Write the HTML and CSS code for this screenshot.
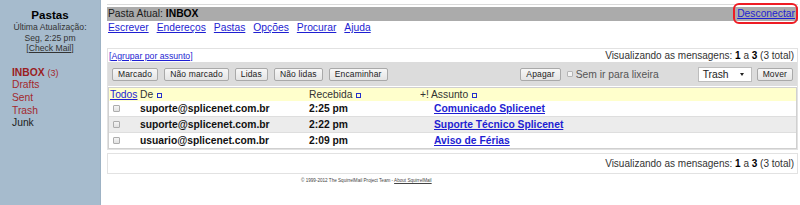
FILE: index.html
```html
<!DOCTYPE html>
<html lang="pt-BR">
<head>
<meta charset="utf-8">
<title>SquirrelMail - INBOX</title>
<link rel="stylesheet" href="styles.css">
</head>
<body>
<div class="page">
  <aside class="sidebar">
    <h1 class="side-title">Pastas</h1>
    <div class="side-info">
      <div>Última Atualização:</div>
      <div>Seg, 2:25 pm</div>
      <div>[<a href="#" class="check">Check Mail</a>]</div>
    </div>
    <ul class="folders">
      <li><a class="folder current" href="#">INBOX</a> <span class="count">(3)</span></li>
      <li><a class="folder" href="#">Drafts</a></li>
      <li><a class="folder" href="#">Sent</a></li>
      <li><a class="folder" href="#">Trash</a></li>
      <li><a class="folder junk" href="#">Junk</a></li>
    </ul>
  </aside>
  <main class="main">
    <div class="topline"></div>
    <div class="titlebar">
      <span>Pasta Atual: <b>INBOX</b></span>
      <a class="logout" href="#">Desconectar</a>
    </div>
    <nav class="menu">
      <a href="#">Escrever</a>
      <a href="#">Endereços</a>
      <a href="#">Pastas</a>
      <a href="#">Opções</a>
      <a href="#">Procurar</a>
      <a href="#">Ajuda</a>
    </nav>
    <section class="msgbox">
      <div class="inforow">
        <a class="thread" href="#">[Agrupar por assunto]</a>
        <span class="info">Visualizando as mensagens: <b>1</b> a <b>3</b> (3 total)</span>
      </div>
      <div class="toolbar">
        <div class="group">
          <button class="btn">Marcado</button>
          <button class="btn">Não marcado</button>
          <button class="btn">Lidas</button>
          <button class="btn">Não lidas</button>
          <button class="btn">Encaminhar</button>
        </div>
        <div class="group right">
          <button class="btn">Apagar</button>
          <label class="bypass"><span class="tbox"></span>Sem ir para lixeira</label>
          <span class="select">Trash<span class="arrow"></span></span>
          <button class="btn">Mover</button>
        </div>
      </div>
      <div class="list">
        <div class="row head">
          <span><a href="#">Todos</a></span>
          <span>De <i class="sort"></i></span>
          <span>Recebida <i class="sort"></i></span>
          <span class="flags">+!</span>
          <span class="subj-head">Assunto <i class="sort"></i></span>
        </div>
        <div class="row">
          <span><input type="checkbox" class="cb"></span>
          <span class="from">suporte@splicenet.com.br</span>
          <span class="date">2:25 pm</span>
          <span></span>
          <span class="subj"><a href="#">Comunicado Splicenet</a></span>
        </div>
        <div class="row alt">
          <span><input type="checkbox" class="cb"></span>
          <span class="from">suporte@splicenet.com.br</span>
          <span class="date">2:22 pm</span>
          <span></span>
          <span class="subj"><a href="#">Suporte Técnico Splicenet</a></span>
        </div>
        <div class="row last">
          <span><input type="checkbox" class="cb"></span>
          <span class="from">usuario@splicenet.com.br</span>
          <span class="date">2:09 pm</span>
          <span></span>
          <span class="subj"><a href="#">Aviso de Férias</a></span>
        </div>
      </div>
    </section>
    <section class="msgbox bottom">
      <span class="info">Visualizando as mensagens: <b>1</b> a <b>3</b> (3 total)</span>
    </section>
    <footer class="footer">© 1999-2012 The SquirrelMail Project Team - <a href="#">About SquirrelMail</a></footer>
  </main>
</div>
</body>
</html>
```
FILE: styles.css
```css
* { box-sizing: border-box; }
html, body { margin: 0; padding: 0; }
body {
  font-family: "Liberation Sans", Arial, sans-serif;
  font-size: 10.3px;
  color: #222;
  background: #fff;
  width: 800px;
  height: 205px;
  overflow: hidden;
}
a { color: #1e1ed2; }

.page { display: flex; height: 205px; }

/* sidebar */
.sidebar {
  width: 101px;
  background: #a6bbcd;
  border-right: 1px solid #9db2c4;
  padding-top: 8px;
}
.side-title {
  margin: 0;
  text-align: center;
  font-size: 11.6px;
  font-weight: bold;
  line-height: 14px;
  color: #000;
}
.side-info {
  text-align: center;
  font-size: 8.6px;
  line-height: 10.5px;
  color: #333;
}
.side-info a { color: #333; }
.folders {
  list-style: none;
  margin: 13px 0 0 12px;
  padding: 0;
  font-size: 10.3px;
  line-height: 12.7px;
}
.folder { color: #a3292d; text-decoration: none; }
.folder.current { font-weight: bold; color: #9a1d22; }
.count { color: #a3292d; font-size: 9px; }
.folder.junk { color: #222; }

/* main */
.main {
  flex: 1;
  min-width: 0;
  padding: 4px 2px 0 6px;
}
.topline { height: 1px; background: #dadada; margin-bottom: 2px; }
.titlebar {
  display: flex;
  justify-content: space-between;
  align-items: center;
  background: #ababab;
  height: 14px;
  line-height: 14px;
  padding: 0 3px 0 1px;
  color: #1a1a1a;
}
.titlebar b { color: #000; }
.logout { position: relative; }
.logout::after {
  content: "";
  position: absolute;
  left: -4px;
  right: -3px;
  top: -4px;
  bottom: -3px;
  border: 2px solid #ee1c24;
  border-radius: 6px;
}
.menu {
  display: flex;
  gap: 8px;
  height: 14px;
  line-height: 14px;
  padding-left: 1px;
}

.msgbox {
  margin-top: 13px;
  border: 1px solid #e2e2e2;
}
.inforow {
  display: flex;
  justify-content: space-between;
  align-items: center;
  height: 13px;
  padding: 0 3px 0 1px;
}
.thread { font-size: 8.7px; }
.info { font-size: 10px; color: #333; }
.info b { color: #000; }

.toolbar {
  display: flex;
  align-items: center;
  height: 24px;
  background: #dcdcdc;
  padding: 0 4px 0 4px;
}
.group { display: flex; align-items: center; gap: 6px; }
.group.right { margin-left: auto; gap: 0; }
.btn {
  font-family: "Liberation Sans", Arial, sans-serif;
  font-size: 8.5px;
  letter-spacing: 0.15px;
  color: #222;
  height: 13px;
  line-height: 11px;
  padding: 0 5px;
  margin: 0;
  border: 1px solid #a9a9a9;
  border-radius: 2px;
  background: linear-gradient(#f7f7f7, #e4e4e4);
}
.bypass {
  display: flex;
  align-items: center;
  color: #555;
  margin-left: 6px;
  margin-right: 39px;
}
.tbox {
  width: 6px;
  height: 6px;
  border: 1px solid #b5b5b5;
  background: #f3f3f3;
  margin-right: 3px;
  border-radius: 1px;
}
.select {
  position: relative;
  display: inline-block;
  width: 54px;
  height: 15px;
  line-height: 13px;
  background: #fff;
  border: 1px solid #bdbdbd;
  padding-left: 4px;
  margin-right: 5px;
  color: #222;
}
.arrow {
  position: absolute;
  right: 7px;
  top: 5px;
  border-left: 2.5px solid transparent;
  border-right: 2.5px solid transparent;
  border-top: 3.5px solid #222;
}

.list {
  margin-top: 1px;
  border: 1px solid #d0d0d0;
}
.row {
  display: grid;
  grid-template-columns: 31px 169px 111px 9px 1fr;
  align-items: center;
  height: 16px;
  border-bottom: 1px solid #dedede;
}
.row.head {
  height: 13px;
  background: #ffffcc;
  border-bottom: none;
  color: #333;
}
.row.alt { background: #ececec; }
.row.last { height: 15px; border-bottom: none; }
.row.head > span:first-child { padding-left: 1px; }
.flags { white-space: nowrap; }
.subj-head { padding-left: 2px; }
.sort {
  display: inline-block;
  width: 5px;
  height: 5px;
  border: 1px solid #2430cc;
  vertical-align: 0;
  margin-left: 1px;
}
.cb {
  appearance: none;
  -webkit-appearance: none;
  display: block;
  width: 7px;
  height: 7px;
  margin: 0 0 0 4px;
  border: 1px solid #adadad;
  border-radius: 1px;
  background: linear-gradient(#f4f4f4, #e2e2e2);
}
.from, .date { font-weight: bold; color: #111; }
.subj { padding-left: 5px; font-weight: bold; }

.bottom {
  margin-top: 3px;
  height: 21px;
  display: flex;
  align-items: center;
  justify-content: flex-end;
  padding-right: 3px;
}
.footer {
  margin-top: 3px;
  padding-left: 194px;
  font-size: 4.6px;
  line-height: 8px;
  color: #444;
}
.footer a { color: #444; }
```
